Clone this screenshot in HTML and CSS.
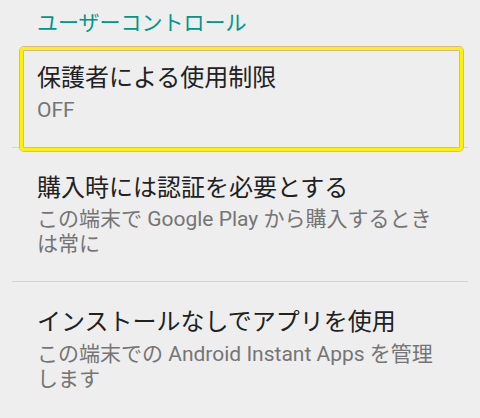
FILE: index.html
```html
<!DOCTYPE html>
<html lang="ja">
<head>
<meta charset="utf-8">
<link rel="stylesheet" href="styles.css">
</head>
<body>
<div class="screen">
  <div class="category">ユーザーコントロール</div>
  <div class="list">
    <div class="item focused">
      <div class="title">保護者による使用制限</div>
      <div class="summary">OFF</div>
      <div class="focus-ring"></div>
    </div>
    <div class="item">
      <div class="title">購入時には認証を必要とする</div>
      <div class="summary">この端末で Google Play から購入するときは常に</div>
    </div>
    <div class="item last">
      <div class="title">インストールなしでアプリを使用</div>
      <div class="summary">この端末での Android Instant Apps を管理します</div>
    </div>
  </div>
</div>
</body>
</html>
```

FILE: styles.css
```css
html, body {
  margin: 0;
  padding: 0;
  background: #eeeeee;
}
.screen {
  width: 480px;
  height: 418px;
  overflow: hidden;
  background: #eeeeee;
  font-family: Roboto, "Noto Sans CJK JP", sans-serif;
}
.category {
  padding: 10px 0 2px 37px;
  height: 26px;
  line-height: 26px;
  font-size: 21px;
  color: #009688;
}
.list {
  margin: 0 12px;
}
.item {
  position: relative;
  padding: 24px 27px 24px 25px;
  border-bottom: 1px solid #d4d4d4;
}
.item.last {
  border-bottom: none;
}
.title {
  font-size: 24px;
  line-height: 32px;
  color: #212121;
}
.summary {
  margin-top: 3.5px;
  font-size: 21px;
  line-height: 25px;
  color: #757575;
}
.focus-ring {
  position: absolute;
  left: 8px;
  top: 9px;
  width: 437px;
  height: 98px;
  border: 3px solid #fff200;
  border-radius: 4px;
  box-shadow: 0 0 0 1px #d6b98e, inset 0 0 0 1px #d6b98e;
}
```
